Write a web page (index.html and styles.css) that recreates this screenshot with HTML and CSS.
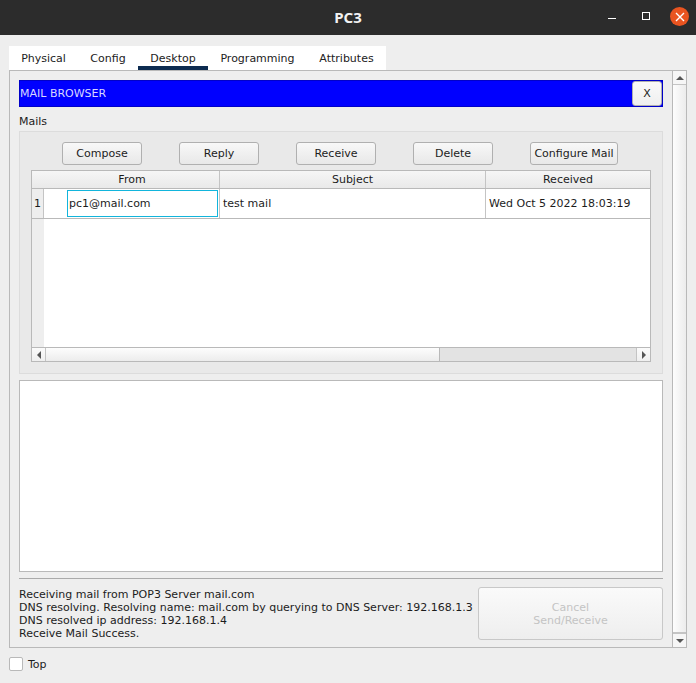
FILE: index.html
```html
<!DOCTYPE html>
<html lang="en">

<head>
    <meta charset="UTF-8">
    <meta name="viewport" content="width=device-width, initial-scale=1.0">
    <title>PC3</title>
    <link rel="stylesheet" href="styles.css">
</head>

<body>
    <header class="titlebar">
        <span class="title">PC3</span>
        <div class="winbtns">
            <svg class="winicon winicon-min" width="12" height="13" viewBox="0 0 12 13"><rect x="2" y="8" width="8" height="1" fill="#fff"/></svg>
            <svg class="winicon" width="12" height="13" viewBox="0 0 12 13"><rect x="1.5" y="2.5" width="7" height="7" fill="none" stroke="#fff"/></svg>
            <span class="closebtn">
                <svg width="10" height="10" viewBox="0 0 10 10"><path d="M1 1L9 9M9 1L1 9" stroke="#fff" stroke-width="1.4"/></svg>
            </span>
        </div>
    </header>

    <main class="window">
        <nav class="tabs">
            <span class="tab tab-physical">Physical</span>
            <span class="tab tab-config">Config</span>
            <span class="tab tab-desktop active">Desktop</span>
            <span class="tab tab-programming">Programming</span>
            <span class="tab tab-attributes">Attributes</span>
        </nav>

        <section class="panel">
            <div class="content">
                <div class="bluebar">
                    <span>MAIL BROWSER</span>
                    <button class="btn closeapp">X</button>
                </div>

                <div class="mails-label">Mails</div>

                <div class="group">
                    <div class="toolbar">
                        <button class="btn">Compose</button>
                        <button class="btn">Reply</button>
                        <button class="btn">Receive</button>
                        <button class="btn">Delete</button>
                        <button class="btn btn-config">Configure Mail</button>
                    </div>

                    <div class="table">
                        <div class="thead">
                            <div class="th th-from">From</div>
                            <div class="th th-subject">Subject</div>
                            <div class="th th-received">Received</div>
                        </div>
                        <div class="trow">
                            <div class="rownum">1</div>
                            <div class="td td-from"><span class="editor">pc1@mail.com</span></div>
                            <div class="td td-subject">test mail</div>
                            <div class="td td-received">Wed Oct 5 2022 18:03:19</div>
                        </div>
                        <div class="tempty">
                            <div class="strip"></div>
                        </div>
                        <div class="hscroll">
                            <div class="sbtn sbtn-left"><span class="arrow-left"></span></div>
                            <div class="hthumb"></div>
                            <div class="htrack"></div>
                            <div class="sbtn sbtn-right"><span class="arrow-right"></span></div>
                        </div>
                    </div>
                </div>

                <div class="mailbody"></div>
                <hr class="sep">

                <div class="status">
                    <div class="log">
                        Receiving mail from POP3 Server mail.com<br>
                        DNS resolving. Resolving name: mail.com by querying to DNS Server: 192.168.1.3<br>
                        DNS resolved ip address: 192.168.1.4<br>
                        Receive Mail Success.
                    </div>
                    <button class="btn cancel" disabled>Cancel<br>Send/Receive</button>
                </div>
            </div>

            <div class="vscroll">
                <div class="vbtn"><span class="arrow-up"></span></div>
                <div class="vthumb"></div>
                <div class="vbtn vbtn-down"><span class="arrow-down"></span></div>
            </div>
        </section>

        <label class="topcheck">
            <span class="checkbox"></span>
            <span>Top</span>
        </label>
    </main>
</body>

</html>
```

FILE: styles.css
```css
* {
    box-sizing: border-box;
}

html,
body {
    margin: 0;
    height: 100%;
}

body {
    background: #eeeeee;
    color: #1c1c1c;
    font-family: "DejaVu Sans", sans-serif;
    font-size: 11px;
    overflow: hidden;
}

.titlebar {
    height: 35px;
    background: #2c2c2c;
    display: flex;
    align-items: center;
    justify-content: center;
    position: relative;
}

.title {
    color: #f2f2f2;
    font-family: "Noto Sans", sans-serif;
    font-size: 15px;
    font-weight: 700;
    margin-top: -1px;
}

.winbtns {
    position: absolute;
    top: 7px;
    right: 7px;
    display: flex;
    align-items: center;
    gap: 14px;
}

.winicon {
    margin-right: 2px;
}

.winicon-min {
    margin-right: 9px;
}

.closebtn {
    width: 19px;
    height: 19px;
    margin-left: 1px;
    border-radius: 50%;
    background: #e95420;
    display: flex;
    align-items: center;
    justify-content: center;
}

.window {
    padding: 11px 9px 0;
}

.tabs {
    display: flex;
    width: 377px;
    height: 24px;
    background: #fff;
}

.tab {
    height: 24px;
    padding-top: 6px;
    text-align: center;
    color: #222;
}

.tab-physical { width: 69px; }
.tab-config { width: 60px; }
.tab-desktop { width: 70px; }
.tab-programming { width: 99px; }
.tab-attributes { width: 79px; }

.tab.active {
    border-bottom: 4px solid #0c2b50;
}

.panel {
    width: 678px;
    height: 578px;
    border: 1px solid #b9b9b9;
    display: flex;
}

.content {
    width: 662px;
    padding: 9px 9px 0;
    flex: none;
}

.bluebar {
    width: 644px;
    height: 27px;
    background: #0000ff;
    border: 1px solid #0000c8;
    color: #d8d8ff;
    display: flex;
    align-items: center;
    justify-content: space-between;
}

.btn {
    height: 23px;
    padding: 0;
    border: 1px solid #b0b0b0;
    border-radius: 3px;
    background: linear-gradient(#f8f8f8, #e8e8e8);
    color: #1c1c1c;
    font: 11px "DejaVu Sans", sans-serif;
}

.closeapp {
    width: 30px;
    height: 25px;
    background: linear-gradient(#fafafa, #efefef);
}

.mails-label {
    margin-top: 8px;
    height: 16px;
    line-height: 13px;
}

.group {
    width: 644px;
    height: 243px;
    background: #e9e9e9;
    border: 1px solid #dcdcdc;
    padding: 10px 11px 0;
}

.toolbar {
    display: flex;
    justify-content: space-between;
    padding: 0 33px 0 31px;
}

.toolbar .btn {
    width: 80px;
}

.toolbar .btn-config {
    width: 88px;
}

.table {
    width: 620px;
    height: 192px;
    margin-top: 5px;
    background: #fff;
    border: 1px solid #b9b9b9;
    display: flex;
    flex-direction: column;
}

.thead {
    height: 18px;
    display: flex;
    flex: none;
    background: linear-gradient(#f6f6f6, #e9e9e9);
    border-bottom: 1px solid #b9b9b9;
}

.th {
    text-align: center;
    line-height: 18px;
    border-right: 1px solid #c4c4c4;
}

.th-from { width: 188px; padding-left: 13px; }
.th-subject { width: 266px; }
.th-received { flex: 1; border-right: none; }

.trow {
    height: 30px;
    display: flex;
    flex: none;
    border-bottom: 1px solid #b9b9b9;
}

.rownum {
    width: 12px;
    background: #eeeeee;
    border-right: 1px solid #c4c4c4;
    padding-left: 2px;
    line-height: 29px;
    flex: none;
}

.td {
    line-height: 29px;
    border-right: 1px solid #c4c4c4;
}

.td-from {
    width: 176px;
    padding: 1px 1px 0 23px;
}

.editor {
    display: block;
    height: 27px;
    border: 1px solid #12b5dc;
    line-height: 26px;
    padding-left: 1px;
}

.td-subject {
    width: 266px;
    padding-left: 3px;
}

.td-received {
    flex: 1;
    border-right: none;
    padding-left: 3px;
}

.tempty {
    flex: 1;
}

.strip {
    width: 12px;
    height: 100%;
    background: #eeeeee;
}

.hscroll {
    height: 14px;
    flex: none;
    display: flex;
    border-top: 1px solid #b9b9b9;
}

.sbtn {
    width: 14px;
    flex: none;
    background: linear-gradient(#fbfbfb, #efefef);
    display: flex;
    align-items: center;
    justify-content: center;
}

.sbtn-left {
    border-right: 1px solid #c4c4c4;
}

.sbtn-right {
    border-left: 1px solid #c4c4c4;
}

.hthumb {
    width: 394px;
    background: linear-gradient(#fdfdfd, #ececec);
    border-right: 1px solid #b9b9b9;
    flex: none;
}

.htrack {
    flex: 1;
    background: #e3e3e3;
}

.arrow-left,
.arrow-right,
.arrow-up,
.arrow-down {
    width: 0;
    height: 0;
    border-style: solid;
    border-color: transparent;
}

.arrow-left {
    border-width: 4px 4px 4px 0;
    border-right-color: #555;
}

.arrow-right {
    border-width: 4px 0 4px 4px;
    border-left-color: #555;
}

.arrow-up {
    border-width: 0 4px 4px;
    border-bottom-color: #555;
}

.arrow-down {
    border-width: 4px 4px 0;
    border-top-color: #555;
}

.mailbody {
    width: 644px;
    height: 192px;
    margin-top: 6px;
    background: #fff;
    border: 1px solid #b9b9b9;
}

.sep {
    width: 644px;
    height: 1px;
    margin: 6px 0 8px;
    border: none;
    background: #aaaaaa;
}

.status {
    width: 644px;
    display: flex;
    justify-content: space-between;
}

.log {
    line-height: 13px;
    padding-top: 1px;
    white-space: nowrap;
}

.cancel {
    width: 185px;
    height: 53px;
    line-height: 13px;
    border-color: #c8c8c8;
    background: linear-gradient(#fafafa, #eeeeee);
    color: #c4c4c4;
}

.vscroll {
    width: 15px;
    border-left: 1px solid #b9b9b9;
    display: flex;
    flex-direction: column;
    flex: 1;
}

.vbtn {
    height: 14px;
    flex: none;
    background: #f6f6f6;
    border-bottom: 1px solid #c4c4c4;
    display: flex;
    align-items: center;
    justify-content: center;
}

.vbtn-down {
    border-bottom: none;
    border-top: 1px solid #c4c4c4;
}

.vthumb {
    flex: 1;
    background: linear-gradient(to right, #fdfdfd, #ececec);
    border-bottom: 1px solid #c4c4c4;
}

.topcheck {
    display: flex;
    align-items: center;
    gap: 5px;
    margin-top: 9px;
}

.checkbox {
    width: 14px;
    height: 14px;
    background: #fff;
    border: 1px solid #b9b9b9;
    border-radius: 2px;
}
```
